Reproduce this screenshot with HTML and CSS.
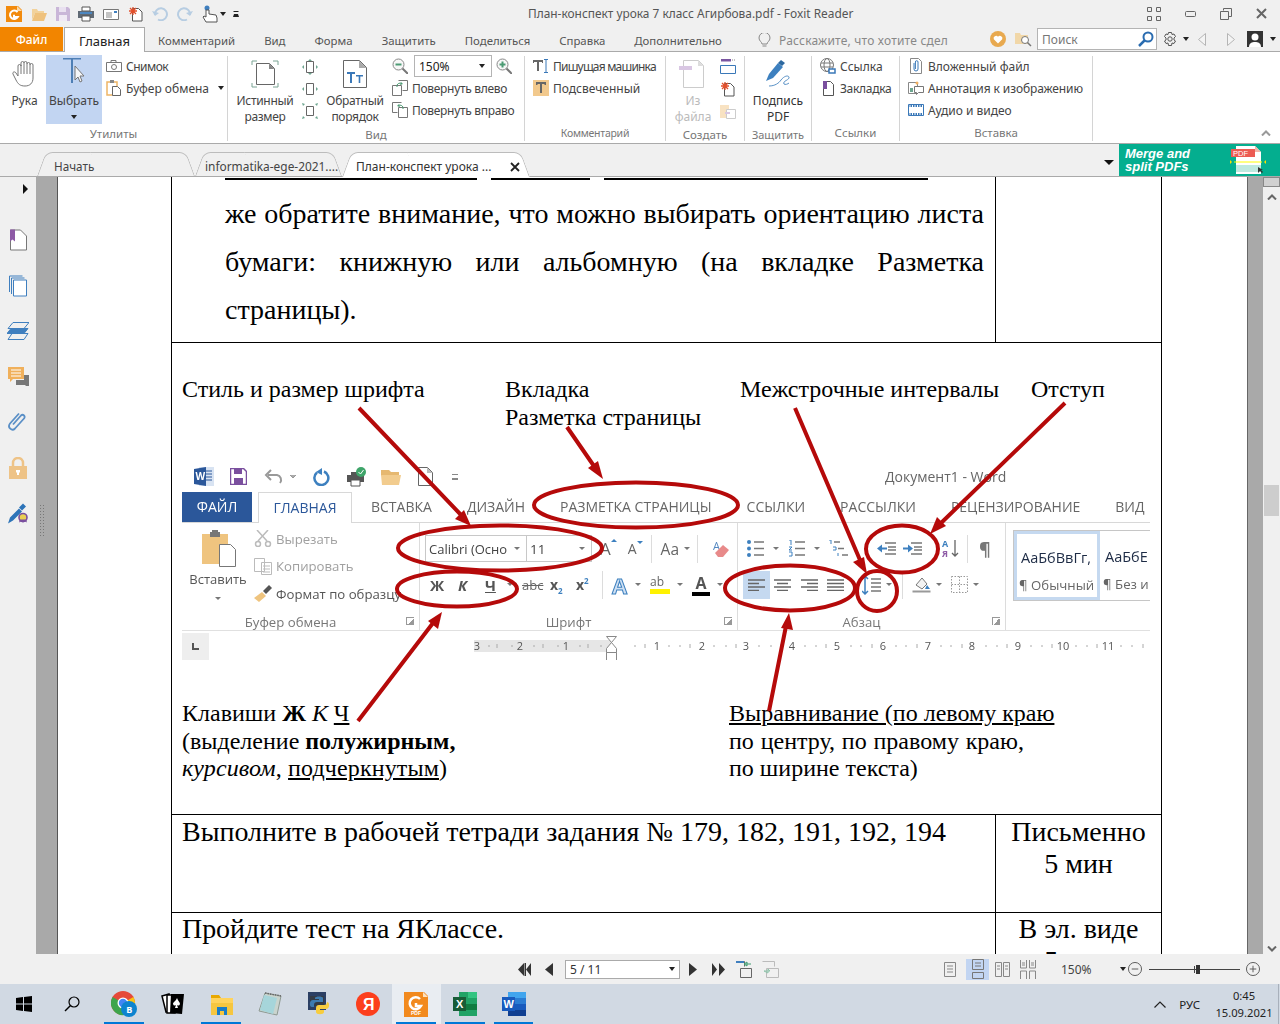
FILE: index.html
```html
<!DOCTYPE html>
<html lang="ru">
<head>
<meta charset="utf-8">
<title>План-конспект урока 7 класс Агирбова.pdf - Foxit Reader</title>
<link rel="stylesheet" href="styles.css">
</head>
<body>
<div class="app">

<header class="titlebar">
  <div class="qa">
    <svg width="16" height="16" viewBox="0 0 16 16"><path d="M0 0h12l4 4v12H0z" fill="#f28a0c"/><path d="M11 0l5 5h-5z" fill="#fbd9a8"/><path d="M11.500 6.200A4.200 4.200 0 1 0 11.800 11H8V8.800" fill="none" stroke="#fff" stroke-width="2"/></svg>
    <svg width="16" height="16" viewBox="0 0 16 16"><path d="M1 3h5l1 2h6v2H4l-3 7z" fill="#f2d29b"/><path d="M4 7h12l-3 8H1z" fill="#efc27d"/></svg>
    <svg width="14" height="14" viewBox="0 0 14 14"><path d="M0 0h12l2 2v12H0z" fill="#c9b6d8"/><path d="M3 0h7v5H3z" fill="#e9e1f0"/><path d="M3 8h8v6H3z" fill="#efe9f4"/></svg>
    <svg width="16" height="16" viewBox="0 0 16 16"><path d="M4 1h8v4H4z" fill="#fff" stroke="#555"/><path d="M0 5h16v7H0z" fill="#606a75"/><path d="M2 6h12v2H2z" fill="#4d87c0"/><path d="M4 10h8v5H4z" fill="#fff" stroke="#555"/></svg>
    <svg width="16" height="14" viewBox="0 0 16 14"><path d="M.5 2.500h15v10H.5z" fill="#fff" stroke="#777"/><path d="M3 6h6M3 8h6M3 10h6" stroke="#888"/><path d="M11 4h3v2h-3z" fill="#3f7fbf"/></svg>
    <svg width="15" height="16" viewBox="0 0 15 16"><path d="M4.500 2.500h6l3.500 3.500v9H4.500z" fill="#fff" stroke="#555"/><path d="M5 1v8M1 5h8M2 2l6 6M8 2L2 8" stroke="#e2502c" stroke-width="1.300"/></svg>
    <svg width="16" height="15" viewBox="0 0 16 15"><path d="M3 9a6 6 0 1 1 3 4.500" fill="none" stroke="#b7cde2" stroke-width="2"/><path d="M0 5l3 5 4-3z" fill="#b7cde2"/></svg>
    <svg width="16" height="15" viewBox="0 0 16 15"><path d="M13 9a6 6 0 1 0-3 4.500" fill="none" stroke="#b7cde2" stroke-width="2"/><path d="M16 5l-3 5-4-3z" fill="#b7cde2"/></svg>
    <svg width="18" height="18" viewBox="0 0 18 18"><circle cx="6" cy="3" r="2.500" fill="#3f7fbf"/><path d="M5 5v7L3 11l-1 1 3 5h11v-4l-1-3-7-1V5z" fill="#fff" stroke="#555"/></svg>
    <span class="caret dark"></span>
    <span class="customize"></span>
  </div>
  <div class="doc-title">План-конспект урока 7 класс Агирбова.pdf - Foxit Reader</div>
  <div class="winbtns">
    <svg width="14" height="14" viewBox="0 0 14 14" fill="none" stroke="#666"><path d="M.5.500h4v4h-4zM9.500.500h4v4h-4zM.5 9.500h4v4h-4zM9.500 9.500h4v4h-4z"/></svg>
    <svg width="11" height="6" viewBox="0 0 11 6" fill="none" stroke="#666"><rect x=".5" y=".5" width="10" height="5" rx="1"/></svg>
    <svg width="12" height="12" viewBox="0 0 12 12" fill="none" stroke="#666"><path d="M3.500 2.500v-2h8v8h-3M.5 3.500h8v8h-8z"/></svg>
    <svg width="11" height="11" viewBox="0 0 11 11" fill="none" stroke="#666" stroke-width="2"><path d="M1 1l9 9M10 1l-9 9"/></svg>
  </div>
</header>

<nav class="menubar">
  <span class="file-tab">Файл</span>
  <span class="home-tab">Главная</span>
  <div class="menu-items">
    <span>Комментарий</span><span>Вид</span><span>Форма</span><span>Защитить</span><span>Поделиться</span><span>Справка</span><span>Дополнительно</span>
  </div>
  <div class="tell">
    <svg width="13" height="15" viewBox="0 0 13 15" fill="none" stroke="#888"><path d="M4 11c0-2-3-3-3-6a5.500 5.500 0 0 1 11 0c0 3-3 4-3 6zM4.500 13h4"/></svg>
    <span>Расскажите, что хотите сдел</span>
  </div>
  <div class="menu-right">
    <svg class="heart" width="16" height="16" viewBox="0 0 16 16"><circle cx="8" cy="8" r="8" fill="#e8a94f"/><path d="M8 12.500L3.800 8.300a2.500 2.500 0 0 1 4.200-2.600 2.500 2.500 0 0 1 4.200 2.600z" fill="#fff"/></svg>
    <svg class="foldersearch" width="17" height="16" viewBox="0 0 17 16"><path d="M0 2h5l1 2h7v9H0z" fill="#f1d7a8"/><circle cx="10" cy="9" r="3.500" fill="#fff" stroke="#777"/><path d="M12.500 11.500l3.500 3.500" stroke="#777" stroke-width="1.500"/></svg>
    <div class="searchbox"><span>Поиск</span>
      <svg width="16" height="16" viewBox="0 0 16 16" fill="none" stroke="#2a6cb0" stroke-width="2"><circle cx="10" cy="6" r="4.500"/><path d="M6.500 9.500L1 15" stroke-width="2.500"/></svg>
    </div>
    <svg class="gear" width="14" height="14" viewBox="0 0 14 14" fill="none" stroke="#555"><circle cx="7" cy="7" r="2.200"/><path d="M5.500.5h3l.5 2 2-.5 1.500 2.500L11 6v2l1.500 1-1.500 2.500-2-.5-.5 2.500h-3L5 11l-2 .5L1.500 9 3 8V6L1.500 4.500 3 2l2 .5z"/></svg>
    <span class="caret dark"></span>
    <svg class="navl" width="8" height="13" viewBox="0 0 8 13" fill="#f4f4f4" stroke="#b5b5b5"><path d="M7.500.5v12L.5 6.500z"/></svg>
    <svg class="navr" width="8" height="13" viewBox="0 0 8 13" fill="#f4f4f4" stroke="#b5b5b5"><path d="M.5.500v12l7-6z"/></svg>
    <svg class="avatar" width="16" height="16" viewBox="0 0 16 16"><path d="M0 0h16v16H0z" fill="#333"/><circle cx="8" cy="6" r="3.500" fill="#fff"/><path d="M2 16c0-4 3-5 6-5s6 1 6 5z" fill="#fff"/></svg>
    <span class="caret dark"></span>
  </div>
</nav>

<section class="ribbon">
  <div class="rgroup g-util">
    <div class="rbody">
      <div class="big hand"><svg width="26" height="28" viewBox="0 0 26 28" fill="#fff" stroke="#777"><path d="M6 16V6a1.500 1.500 0 0 1 3 0V3a1.500 1.500 0 0 1 3 0v0a1.500 1.500 0 0 1 3 0v1a1.500 1.500 0 0 1 3 0v1a1.500 1.500 0 0 1 3 0v13c0 5-3 8-8 8s-7-2-9-6l-3-6c-1-2 2-3 3-1z"/><path d="M9 5v9M12 3v11M15 4v10M18 5v9"/></svg><span>Рука</span></div>
      <div class="big select"><svg width="30" height="30" viewBox="0 0 30 30"><path d="M2 1h18v1.500h-8V26h-2V2.500H2z" fill="#4e7fb5"/><path d="M14 9v14l3-3 2 5 2-1-2-5h4z" fill="#f4f6f9" stroke="#777"/></svg><span>Выбрать</span><span class="caret dark under"></span></div>
      <div class="small-col c-snap">
        <div class="srow"><svg width="16" height="12" viewBox="0 0 16 12" fill="none" stroke="#777"><path d="M.5 2.500h15v9H.5z"/><circle cx="8" cy="7" r="2.500"/><path d="M5 2.500v-2h5v2"/></svg><span class="ls5">Снимок</span></div>
        <div class="srow"><svg width="16" height="16" viewBox="0 0 16 16" fill="none"><path d="M1 2h10v13H1z" stroke="#eeb566" stroke-width="1.500"/><path d="M4 0h4v3H4z" fill="#888"/><path d="M6.500 6.500h5l3 3v6h-8z" fill="#fff" stroke="#666"/></svg><span>Буфер обмена</span><span class="caret dark gapped"></span></div>
      </div>
    </div>
    <div class="rlabel">Утилиты</div>
  </div>

  <div class="rgroup g-view">
    <div class="rbody">
      <div class="big b-true"><svg width="28" height="28" viewBox="0 0 28 28" fill="none"><path d="M1 5V1h5M22 1h5v4M1 23v4h5M22 27h5v-4" stroke="#7aa494"/><path d="M5.500 3.500h13l5 5v16h-18z" fill="#fff" stroke="#666"/><path d="M18 3.500l5.500 5.500H18z" fill="#888"/></svg><span class="ls3">Истинный<br>размер</span></div>
      <div class="iconcol">
        <svg width="16" height="16" viewBox="0 0 16 16" fill="none"><path d="M4.500 2.500h7v11h-7z" stroke="#666"/><path d="M8 0l2 2H6zM8 16l2-2H6zM0 8l2-2v4zM16 8l-2-2v4z" fill="#6ea690"/></svg>
        <svg width="16" height="16" viewBox="0 0 16 16" fill="none"><path d="M4.500 2.500h7v11h-7z" stroke="#666"/><path d="M0 8l2-2v4zM16 8l-2-2v4z" fill="#6ea690"/></svg>
        <svg width="16" height="16" viewBox="0 0 16 16" fill="none"><path d="M4.500 3.500h7v9h-7z" stroke="#666"/><path d="M0 0l3 1-2 2zM16 0l-1 3-2-2zM0 16l1-3 2 2zM16 16l-3-1 2-2z" fill="#6ea690"/></svg>
      </div>
      <div class="big b-rev"><svg width="24" height="28" viewBox="0 0 24 28" fill="none"><path d="M.5.500h16l7 7v20H.5z" fill="#fff" stroke="#666"/><path d="M16 .5l7.500 7.500H16z" fill="#aaa"/><path d="M4 12h8v2H9v9H7v-9H4zM13 15h7v1.500h-2.700V23h-1.600v-6.500H13z" fill="#3a78b8"/></svg><span class="ls3">Обратный<br>порядок</span></div>
      <div class="small-col c-zoom">
        <div class="srow"><svg width="16" height="16" viewBox="0 0 16 16" fill="none"><circle cx="6.500" cy="6.500" r="5.500" stroke="#888" fill="#f7f7f7"/><path d="M3.500 6.500h6" stroke="#4c9b74" stroke-width="2"/><path d="M10.500 10.500L16 16" stroke="#777" stroke-width="2"/></svg>
          <div class="combo"><span>150%</span><span class="caret dark"></span></div>
          <svg width="16" height="16" viewBox="0 0 16 16" fill="none"><circle cx="6.500" cy="6.500" r="5.500" stroke="#888" fill="#f7f7f7"/><path d="M3.500 6.500h6M6.500 3.500v6" stroke="#4c9b74" stroke-width="2"/><path d="M10.500 10.500L16 16" stroke="#777" stroke-width="2"/></svg></div>
        <div class="srow"><svg width="16" height="16" viewBox="0 0 16 16" fill="none"><path d="M6.500.500h9v10h-5M.5 5.500h9v10h-9z" stroke="#777"/><path d="M5 7a3 3 0 0 1 5-3" stroke="#4c9b74"/><path d="M9 2l2 2-3 1z" fill="#4c9b74"/></svg><span class="ls3">Повернуть влево</span></div>
        <div class="srow"><svg width="16" height="16" viewBox="0 0 16 16" fill="none"><path d="M9.500.500h-9v10h5M15.500 5.500h-9v10h9z" stroke="#777"/><path d="M11 7a3 3 0 0 0-5-3" stroke="#4c9b74"/><path d="M7 2L5 4l3 1z" fill="#4c9b74"/></svg><span class="ls3">Повернуть вправо</span></div>
      </div>
    </div>
    <div class="rlabel">Вид</div>
  </div>

  <div class="rgroup g-comm">
    <div class="rbody">
      <div class="small-col">
        <div class="srow"><svg width="16" height="14" viewBox="0 0 16 14"><path d="M0 1h10v3H9V3H6v9H4V3H1v1H0z" fill="#666"/><path d="M11 .5h4M13 .5v13M11 13.500h4" stroke="#3a78b8" fill="none"/></svg><span class="ls8">Пишущая машинка</span></div>
        <div class="srow"><svg width="16" height="16" viewBox="0 0 16 16"><path d="M0 0h16v16H0z" fill="#f2c98d"/><path d="M3 2h10v3h-1.500V4H9v9H7V4H4.500v1H3z" fill="#666"/></svg><span>Подсвеченный</span></div>
      </div>
    </div>
    <div class="rlabel lab-comm">Комментарий</div>
  </div>

  <div class="rgroup g-create">
    <div class="rbody">
      <div class="big b-file disabled"><svg width="28" height="28" viewBox="0 0 28 28"><path d="M4.500.500h15l5 5v22h-20z" fill="#fff" stroke="#ccc"/><path d="M19 .5l5.500 5.500H19z" fill="#ddd"/><path d="M0 6h13v4H0z" fill="#d9c7e3"/></svg><span>Из<br>файла</span></div>
      <div class="iconcol">
        <svg width="16" height="16" viewBox="0 0 16 16" fill="none"><path d="M1 1h10" stroke="#7a55a0" stroke-width="3"/><path d="M.5 6.500h15v8H.5z" stroke="#3a78b8"/><path d="M12 1h3" stroke="#888" stroke-dasharray="1 1"/></svg>
        <svg width="15" height="16" viewBox="0 0 15 16"><path d="M4.500 2.500h6l3.500 3.500v9H4.500z" fill="#fff" stroke="#555"/><path d="M5 1v8M1 5h8M2 2l6 6M8 2L2 8" stroke="#e2502c" stroke-width="1.300"/></svg>
        <svg width="16" height="16" viewBox="0 0 16 16" fill="none"><path d="M0 2h9v13H0z" fill="#f8e2c2"/><path d="M6.500 6.500h9v9h-9z" fill="#fff" stroke="#ccc"/><path d="M5 10h5" stroke="#d9c7e3" stroke-width="2"/></svg>
      </div>
    </div>
    <div class="rlabel">Создать</div>
  </div>

  <div class="rgroup g-protect">
    <div class="rbody">
      <div class="big b-sign"><svg width="28" height="28" viewBox="0 0 28 28" fill="none"><path d="M2 21l3-7 9-11 5 4-10 11z" fill="#3d80bf"/><path d="M14 3l3-3 4 3-3 3z" fill="#2d689f"/><path d="M5 26c6 0 10-3 12-6 3-4 7-5 8-3 1 3-7 4-5 7 1 1 4 0 5-1" stroke="#5a92c7"/></svg><span>Подпись<br>PDF</span></div>
    </div>
    <div class="rlabel lab-prot">Защитить</div>
  </div>

  <div class="rgroup g-links">
    <div class="rbody">
      <div class="small-col">
        <div class="srow"><svg width="16" height="16" viewBox="0 0 16 16" fill="none" stroke="#777"><circle cx="7" cy="7" r="6.500"/><ellipse cx="7" cy="7" rx="3" ry="6.500"/><path d="M1 5h12M1 9h12"/><path d="M9 11h6v4H9z" fill="#fff" stroke="#3a78b8" stroke-width="1.500"/></svg><span>Ссылка</span></div>
        <div class="srow"><svg width="16" height="15" viewBox="0 0 16 15" fill="none"><path d="M3.500.500h7l3 3v11h-10z" fill="#fff" stroke="#555"/><path d="M3 0h4v8H3z" fill="#7a4f9e"/></svg><span class="ls3">Закладка</span></div>
      </div>
    </div>
    <div class="rlabel">Ссылки</div>
  </div>

  <div class="rgroup g-insert">
    <div class="rbody">
      <div class="small-col">
        <div class="srow"><svg width="16" height="16" viewBox="0 0 16 16" fill="none"><path d="M2.500.500h8l3 3v12h-11z" stroke="#888"/><path d="M6 5v6a2 2 0 0 0 4 0V4a1.300 1.300 0 0 0-2.600 0v7" stroke="#3a78b8"/></svg><span>Вложенный файл</span></div>
        <div class="srow"><svg width="16" height="16" viewBox="0 0 16 16" fill="none"><path d="M.5 2.500h9v11h-9z" stroke="#888"/><path d="M2 12V8h3v4z" fill="#6ea690"/><circle cx="9" cy="3" r="1.500" fill="#f2b05f"/><path d="M6.500 6.500h9v6h-5l-2 2v-2h-2z" fill="#fff" stroke="#777"/></svg><span class="ls1">Аннотация к изображению</span></div>
        <div class="srow"><svg width="16" height="12" viewBox="0 0 16 12" fill="none"><path d="M.5.500h15v11H.5z" stroke="#3a78b8"/><path d="M0 2h16M0 10h16" stroke="#3a78b8" stroke-width="2" stroke-dasharray="1.500 1"/></svg><span>Аудио и видео</span></div>
      </div>
    </div>
    <div class="rlabel">Вставка</div>
  </div>
  <svg class="collapse" width="10" height="6" viewBox="0 0 10 6" fill="none" stroke="#999" stroke-width="2"><path d="M1 5.500L5 1.500l4 4"/></svg>
</section>

<div class="tabstrip">
  <div class="doc-tab t-start"><span>Начать</span></div>
  <div class="doc-tab t-info"><span>informatika-ege-2021....</span></div>
  <div class="doc-tab t-plan active"><span>План-конспект урока ...</span>
    <svg width="10" height="10" viewBox="0 0 10 10" stroke="#222" stroke-width="1.800"><path d="M1 1l8 8M9 1l-8 8"/></svg></div>
  <span class="strip-arrow"></span>
  <div class="ad">
    <span class="ad-text">Merge and<br>split PDFs</span>
    <svg width="36" height="28" viewBox="0 0 36 28"><path d="M6 0h19l6 6v22H6z" fill="#fff"/><path d="M25 0l6 6h-6z" fill="#f3b5a9"/><path d="M1 3h24v8H1z" fill="#ec5b53"/><text x="3" y="10" font-size="7.500" fill="#fff" font-family="Liberation Sans, sans-serif">PDF</text><path d="M4 16h28" stroke="#ff0" stroke-width="1"/><path d="M6 19h25v7H6z" fill="#bfe9df"/><path d="M0 14v4l2-2zM36 14v4l-2-2z" fill="#fde000"/><path d="M28 21v6l2-2 2 2 1-1-2-2h2z" fill="#333"/></svg>
  </div>
</div>

<main class="viewer">
  <aside class="sidepanel">
    <span class="expand"></span>
    <svg width="17" height="21" viewBox="0 0 17 21"><path d="M.5.500h10l6 6v14H.5z" fill="#fff" stroke="#777"/><path d="M0 0h5v12l-2.500-2L0 12z" fill="#8e5ba6"/></svg>
    <svg width="18" height="21" viewBox="0 0 18 21" fill="#fff" stroke="#3f7fbf"><path d="M.5.500h13M.5.500v16M2.500 2.500h13M2.500 2.500v16"/><path d="M4.500 4.500h13v16h-13z"/></svg>
    <svg width="22" height="19" viewBox="0 0 22 19" fill="none" stroke="#3f7fbf"><path d="M6 1h16l-5 6H1z"/><path d="M4 7h17l-4 5H0z" fill="#3f7fbf"/><path d="M5 12h16l-4 6H1z"/></svg>
    <svg width="21" height="20" viewBox="0 0 21 20"><path d="M0 0h16v12H5l-3 3v-3H0z" fill="#f0b05b"/><path d="M3 3h10M3 6h10M3 9h10" stroke="#fff"/><path d="M8 13h8v-5h5v11h-3l-1-1H8z" fill="#777"/></svg>
    <svg width="20" height="21" viewBox="0 0 20 21" fill="none" stroke="#5a8fc6" stroke-width="1.800"><path d="M5 13l8-9c2-2 5 1 3 3l-9 10c-3 3-8-1-5-5l9-10"/></svg>
    <svg width="18" height="22" viewBox="0 0 18 22"><path d="M4 10V6a5 5 0 0 1 10 0v4" fill="none" stroke="#eec387" stroke-width="2.500"/><path d="M0 9h18v13H0z" fill="#eec387"/><path d="M7 13h4v2l-1 1v2H8v-2l-1-1z" fill="#fff"/></svg>
    <svg width="21" height="21" viewBox="0 0 21 21"><path d="M0 21l2-6 9-9 3 3-9 9zM11 5l4-4 3 3-4 4z" fill="#2d74b8"/><circle cx="15" cy="15" r="4" fill="#e9cf52" stroke="#7a4f9e" stroke-width="1.600"/><path d="M11 20l1-3h6l1 3-2-1-2 1-2-1z" fill="#7a4f9e"/></svg>
  </aside>
  <div class="workspace">
    <span class="grip"></span>
    <article class="page">
      <div class="doc-table">
        <div class="row r1">
          <div class="cell main-cell">
            <div class="cut-lines"><i class="b1"></i><i class="b2"></i><i class="b3"></i></div>
            <p class="para">же обратите внимание, что можно выбирать ориентацию листа бумаги: книжную или альбомную (на вкладке Разметка страницы).</p>
          </div>
          <div class="cell side-cell"></div>
        </div>

        <div class="row r2">
          <div class="labels">
            <span>Стиль и размер шрифта</span>
            <span>Вкладка<br>Разметка страницы</span>
            <span>Межстрочные интервалы</span>
            <span>Отступ</span>
          </div>

          <div class="word">
            <div class="w-qa">
              <svg class="m1" width="20" height="19" viewBox="0 0 20 19"><path d="M5 0h15v19H5z" fill="#d8e3f2"/><path d="M10 4h8M10 7h8M10 10h8M10 13h8" stroke="#2b579a"/><path d="M0 2l12-2v19L0 17z" fill="#2b579a"/><text x="1.500" y="13" font-size="10" font-weight="700" fill="#fff" font-family="Open Sans, sans-serif">W</text></svg>
              <svg class="m2" width="17" height="17" viewBox="0 0 17 17"><path d="M.5.500h13l3 3v13H.5z" fill="#fff" stroke="#7a4f9e" stroke-width="1.500"/><path d="M4 1h8v5H4z" fill="#7a4f9e"/><path d="M4 10h9v6H4z" fill="#7a4f9e"/></svg>
              <svg class="m3" width="34" height="15" viewBox="0 0 34 15" fill="none" stroke="#999" stroke-width="2"><path d="M4 6h9a5 5 0 0 1 3 8"/><path d="M7 1L2 6l5 5"/><path d="M26 6l3 3 3-3" stroke-width="1" fill="#aaa"/></svg>
              <svg class="m4" width="17" height="18" viewBox="0 0 17 18" fill="none" stroke="#3d80bf" stroke-width="2.500"><path d="M11 3.500a7 7 0 1 1-7 1"/><path d="M9 0v7l-6 -3" fill="#3d80bf" stroke="none"/></svg>
              <svg class="m5" width="20" height="20" viewBox="0 0 20 20"><path d="M4 5h10v4H4zM0 8h17v7H0z" fill="#555"/><path d="M4 13h9v6H4z" fill="#fff" stroke="#555"/><circle cx="14" cy="5" r="5" fill="#3fa56a"/><path d="M11.500 5l2 2 3-4" stroke="#fff" fill="none"/></svg>
              <svg class="m6" width="20" height="16" viewBox="0 0 20 16"><path d="M0 1h8l2 2h8v4H0z" fill="#e6b870"/><path d="M0 6h20l-2 10H1z" fill="#f2cc8e"/></svg>
              <svg class="m7" width="15" height="19" viewBox="0 0 15 19"><path d="M.5.500h9l5 5v13H.5z" fill="#fff" stroke="#666"/><path d="M9 .5l5.500 5.500H9z" fill="#bbb"/></svg>
              <span class="w-cust"></span>
              <span class="w-title">Документ1 - Word</span>
            </div>
            <div class="w-tabs">
              <span class="w-file">ФАЙЛ</span>
              <span class="w-home">ГЛАВНАЯ</span>
              <div class="w-tablist"><span>ВСТАВКА</span><span>ДИЗАЙН</span><span>РАЗМЕТКА СТРАНИЦЫ</span><span>ССЫЛКИ</span><span>РАССЫЛКИ</span><span>РЕЦЕНЗИРОВАНИЕ</span><span>ВИД</span></div>
            </div>
            <div class="w-rib">
              <div class="w-group wg-clip">
                <div class="wg-body">
                  <div class="paste">
                    <svg width="34" height="37" viewBox="0 0 34 37"><path d="M0 4h26v30H0z" fill="#efc47f"/><path d="M8 2h10v5H8z" fill="#777"/><path d="M10 0h6v3h-6z" fill="#777"/><path d="M17.500 14.500h11l5 5v17h-16z" fill="#fff" stroke="#777"/></svg>
                    <span>Вставить</span><i class="w-caret"></i>
                  </div>
                  <div class="clip-tools">
                    <div class="ct dim"><svg width="18" height="17" viewBox="0 0 18 17" fill="none" stroke="#bbb" stroke-width="1.500"><path d="M3 0l10 11M14 0L4 11"/><circle cx="4" cy="14" r="2.500"/><circle cx="14" cy="14" r="2.500"/></svg><span>Вырезать</span></div>
                    <div class="ct dim"><svg width="18" height="17" viewBox="0 0 18 17" fill="#fff" stroke="#bbb"><path d="M.5.500h10v13H.5zM7.500 4.500h10v12h-10z"/><path d="M9 8h7M9 11h7M9 14h7"/></svg><span>Копировать</span></div>
                    <div class="ct"><svg width="18" height="17" viewBox="0 0 18 17"><path d="M0 13l8-6 4 4-7 6z" fill="#efc47f"/><path d="M9 6l6-6 3 3-6 6z" fill="#555"/></svg><span>Формат по образцу</span></div>
                  </div>
                </div>
                <div class="wg-label">Буфер обмена<i class="launch"></i></div>
              </div>

              <div class="w-group wg-font">
                <div class="wg-body column">
                  <div class="f-row f1">
                    <div class="w-combo cb-font"><span>Calibri (Осно</span><i class="w-caret"></i></div>
                    <div class="w-combo cb-size"><span>11</span><i class="w-caret"></i></div>
                    <span class="bigA up">A</span><span class="bigA down">A</span><i class="w-div d1"></i>
                    <span class="aa">Aa</span><i class="w-caret"></i><i class="w-div d2"></i>
                    <svg class="eraser" width="16" height="18" viewBox="0 0 16 18"><text x="0" y="10" font-size="11" fill="#5588c0" font-family="Open Sans, sans-serif">A</text><path d="M2 13l8-8 6 5-6 7H5z" fill="#e88a8a"/></svg>
                  </div>
                  <div class="f-row f2">
                    <b class="bt b-zh">Ж</b><i class="bt b-k">К</i><u class="bt b-ch">Ч</u><i class="w-caret c-ch"></i>
                    <s class="abc">abc</s><span class="xs x1">x<sub>2</sub></span><span class="xs x2">x<sup>2</sup></span><i class="w-div d3"></i>
                    <span class="outlineA">A</span><i class="w-caret"></i>
                    <span class="hiA">ab</span><i class="w-caret"></i>
                    <span class="colorA">A</span><i class="w-caret"></i>
                  </div>
                </div>
                <div class="wg-label">Шрифт<i class="launch"></i></div>
              </div>

              <div class="w-group wg-para">
                <div class="wg-body column">
                  <div class="p-row p1">
                    <svg width="17" height="17" viewBox="0 0 17 17"><path d="M7 2h10M7 8.500h10M7 15h10" stroke="#777" stroke-width="1.500"/><circle cx="2" cy="2" r="2" fill="#3d80bf"/><circle cx="2" cy="8.500" r="2" fill="#3d80bf"/><circle cx="2" cy="15" r="2" fill="#3d80bf"/></svg><i class="w-caret"></i>
                    <svg width="17" height="17" viewBox="0 0 17 17"><path d="M7 2h10M7 8.500h10M7 15h10" stroke="#777" stroke-width="1.500"/><path d="M1 0h2v5M1 7h3l-3 3h3M1 12h3v4H1" stroke="#3d80bf" fill="none"/></svg><i class="w-caret"></i>
                    <svg width="19" height="17" viewBox="0 0 19 17"><path d="M5 2h6M9 8.500h6M13 15h6" stroke="#777" stroke-width="1.500"/><path d="M0 0h2v4M4 7h3v3H4M9 13v3" stroke="#3d80bf" fill="none"/></svg>
                    <svg class="outd" width="19" height="13" viewBox="0 0 19 13"><path d="M8 1h11M11 5h8M11 8h8M8 12h11" stroke="#777" stroke-width="1.300"/><path d="M0 6.500l5-4v3h5v2H5v3z" fill="#3d80bf"/></svg>
                    <svg class="ind" width="19" height="13" viewBox="0 0 19 13"><path d="M8 1h11M11 5h8M11 8h8M8 12h11" stroke="#777" stroke-width="1.300"/><path d="M10 6.500l-5-4v3H0v2h5v3z" fill="#3d80bf"/></svg>
                    <svg class="sort" width="17" height="19" viewBox="0 0 17 19"><text x="0" y="8" font-size="9" font-weight="700" fill="#3d80bf" font-family="Open Sans, sans-serif">A</text><text x="0" y="18" font-size="9" font-weight="700" fill="#8e5ba6" font-family="Open Sans, sans-serif">Я</text><path d="M13 1v16M10 14l3 3 3-3" stroke="#666" fill="none" stroke-width="1.300"/></svg>
                    <i class="w-div d4"></i>
                    <span class="pilcrow">¶</span>
                  </div>
                  <div class="p-row p2">
                    <span class="al active"><svg width="17" height="12" viewBox="0 0 17 12" stroke="#666" stroke-width="1.300"><path d="M0 1h17M0 4.500h11M0 8h17M0 11.500h11"/></svg></span>
                    <span class="al"><svg width="17" height="12" viewBox="0 0 17 12" stroke="#666" stroke-width="1.300"><path d="M0 1h17M3 4.500h11M0 8h17M3 11.500h11"/></svg></span>
                    <span class="al"><svg width="17" height="12" viewBox="0 0 17 12" stroke="#666" stroke-width="1.300"><path d="M0 1h17M6 4.500h11M0 8h17M6 11.500h11"/></svg></span>
                    <span class="al"><svg width="17" height="12" viewBox="0 0 17 12" stroke="#666" stroke-width="1.300"><path d="M0 1h17M0 4.500h17M0 8h17M0 11.500h17"/></svg></span>
                    <svg class="ls" width="19" height="20" viewBox="0 0 19 20"><path d="M9 4h10M9 8h10M9 12h10M9 16h10" stroke="#777" stroke-width="1.300"/><path d="M3 1v18M0 4l3-3 3 3M0 16l3 3 3-3" stroke="#3d80bf" fill="none" stroke-width="1.500"/></svg><i class="w-caret"></i><i class="w-div d5"></i>
                    <svg class="fill" width="19" height="18" viewBox="0 0 19 18" fill="none"><path d="M4 9l6-7 5 6-5 5z" fill="#f3f3f3" stroke="#777"/><path d="M15 9l3 4h-5z" fill="#3d80bf"/><path d="M.5 15.500h18" stroke="#999" stroke-width="2"/></svg><i class="w-caret"></i>
                    <svg class="bord" width="17" height="17" viewBox="0 0 17 17" fill="none" stroke="#999" stroke-dasharray="1.500 1.500"><path d="M.5.500h16v16H.5zM8.500.500v16M.5 8.500h16"/></svg><i class="w-caret"></i>
                  </div>
                </div>
                <div class="wg-label">Абзац<i class="launch"></i></div>
              </div>

              <div class="w-styles">
                <div class="st sel"><span class="st-a">АаБбВвГг,</span><span class="st-n">¶ Обычный</span></div>
                <div class="st"><span class="st-a">АаБбЕ</span><span class="st-n">¶ Без и</span></div>
              </div>
            </div>
            <div class="w-ruler">
              <span class="corner"><i></i></span>
              <svg width="968" height="26" viewBox="182 634 968 26">
                <rect x="474" y="640" width="138" height="12" fill="#e6e6e6"/>
                <g class="ticks"><path d="M488 646h2M497 644v4M511 646h2M533 646h2M543 644v4M557 646h2M579 646h2M588 644v4M600 646h2M634 646h2M645 644v4M668 646h2M679 646h2M690 644v4M713 646h2M725 646h2M736 644v4M758 646h2M770 646h2M781 644v4M804 646h2M815 646h2M826 644v4M850 646h2M860 646h2M872 644v4M895 646h2M905 646h2M917 644v4M940 646h2M950 646h2M962 644v4M985 646h2M996 646h2M1007 644v4M1030 646h2M1041 646h2M1052 644v4M1075 646h2M1086 646h2M1097 644v4M1120 646h2M1131 646h2M1143 644v4"/></g>
                <g class="rnums"><text x="477" y="650">3</text><text x="520" y="650">2</text><text x="566" y="650">1</text><text x="657" y="650">1</text><text x="702" y="650">2</text><text x="746" y="650">3</text><text x="792" y="650">4</text><text x="837" y="650">5</text><text x="883" y="650">6</text><text x="928" y="650">7</text><text x="972" y="650">8</text><text x="1018" y="650">9</text><text x="1063" y="650">10</text><text x="1108" y="650">11</text></g>
                <path d="M606.500 636.500h10l-5 6 5 6v4h-10v-4l5-6-5-6zM606.500 652.500h10v8h-10z" fill="#fff" stroke="#888"/>
              </svg>
            </div>
          </div>

          <div class="captions">
            <div class="cap-l">Клавиши <b>Ж</b> <i>К</i> <u>Ч</u><br>(выделение <b>полужирным,</b><br><span class="cap-stretch"><i>курсивом</i>, <u>подчеркнутым</u>)</span></div>
            <div class="cap-r"><u>Выравнивание (по левому краю</u><br><span class="cap-words">по центру, по правому краю,</span><br>по ширине текста)</div>
          </div>

          <svg class="marks" width="990" height="472" viewBox="172 342 990 472" fill="none" stroke="#b50a0a">
            <g stroke-width="4">
              <ellipse cx="636" cy="504" rx="102" ry="22.500"/>
              <ellipse cx="500" cy="547" rx="102" ry="22.500"/>
              <ellipse cx="457" cy="588" rx="60" ry="17.500"/>
              <ellipse cx="790" cy="587" rx="65" ry="22.500"/>
              <ellipse cx="877" cy="590" rx="20" ry="20"/>
              <ellipse cx="902" cy="548" rx="36" ry="23.500"/>
              <path d="M359 407l104 109M567 426l29 42M795 407l65 152M1065 402L940 523M358 720l75-98M769 710l17-85"/>
            </g>
            <g fill="#b50a0a" stroke="none">
              <path d="M471 525l-16-7 9-9z"/>
              <path d="M603 478l-15-11 10-7z"/>
              <path d="M867 573l-14-12 11-5z"/>
              <path d="M930 533l7-17 9 9z"/>
              <path d="M442 611l-4 17-10-8z"/>
              <path d="M789 612l4 17-12-2z"/>
            </g>
          </svg>
        </div>

        <div class="row r3">
          <div class="cell main-cell task">Выполните в рабочей тетради задания № 179, 182, 191, 192, 194</div>
          <div class="cell side-cell center">Письменно<br>5 мин</div>
        </div>
        <div class="row r4">
          <div class="cell main-cell task">Пройдите тест на ЯКлассе.</div>
          <div class="cell side-cell center">В эл. виде<br>5 мин</div>
        </div>
      </div>
    </article>
    <div class="rightgap"></div>
  </div>
  <div class="scrollbar">
    <span class="sb-corner"></span>
    <svg class="sb-up" width="10" height="6" viewBox="0 0 10 6" fill="none" stroke="#666" stroke-width="2"><path d="M1 5.500L5 1.500l4 4"/></svg>
    <span class="sb-thumb"></span>
    <svg class="sb-down" width="10" height="6" viewBox="0 0 10 6" fill="none" stroke="#666" stroke-width="2"><path d="M1 .5L5 4.500l4-4"/></svg>
  </div>
</main>

<footer class="statusbar">
  <div class="pager">
    <svg width="13" height="15" viewBox="0 0 13 15" fill="#333"><path d="M6 1v13L0 7.500zM13 1v13L8 7.500z"/><path d="M6.500 1h1.500v13H6.500z"/></svg>
    <svg class="prev" width="8" height="13" viewBox="0 0 8 13" fill="#333"><path d="M8 0v13L0 6.500z"/></svg>
    <div class="page-combo"><span>5 / 11</span><span class="caret dark"></span></div>
    <svg class="next" width="8" height="13" viewBox="0 0 8 13" fill="#333"><path d="M0 0v13l8-6.500z"/></svg>
    <svg class="last" width="13" height="15" viewBox="0 0 13 15" fill="#333"><path d="M0 1v13l5-6.500zM7 1v13l6-6.500z"/></svg>
    <svg class="view-a" width="17" height="17" viewBox="0 0 17 17" fill="none"><path d="M.5.500h8v5M4.500 7.500h11v9h-11z" stroke="#666"/><path d="M8 3h7M8 3l3-2v4z" stroke="#3f9b70"/><path d="M0 0h8v2H0z" fill="#3f7fbf"/></svg>
    <svg class="view-b" width="17" height="17" viewBox="0 0 17 17" fill="none" stroke="#bbb"><path d="M.5.500h12v5M4.500 7.500h12v9h-12z"/><path d="M2 10h6l-2-2v4z" stroke="#8fc4ab"/></svg>
  </div>
  <div class="zoomctl">
    <svg class="v1" width="12" height="15" viewBox="0 0 12 15" fill="none" stroke="#888"><path d="M.5.500h11v14H.5zM3 4h6M3 7h6M3 10h6"/></svg>
    <span class="v2"><svg width="12" height="20" viewBox="0 0 12 20" fill="none" stroke="#777"><path d="M.5.500h11v10H.5zM.5 13.500h11v6H.5zM3 4h6M3 7h6"/></svg></span>
    <svg class="v3" width="15" height="15" viewBox="0 0 15 15" fill="none" stroke="#888"><path d="M.5.500h6v14h-6zM8.500.500h6v14h-6zM2 4h3M2 7h3M10 4h3M10 7h3"/></svg>
    <svg class="v4" width="16" height="19" viewBox="0 0 16 19" fill="none" stroke="#888"><path d="M.5 0v8h6V0M9.500 0v8h6V0M.5 19v-8h6v8M9.500 19v-8h6v8M2 3h3M2 5h3M11 3h3M11 5h3"/></svg>
    <span class="pct">150%</span>
    <span class="caret dark pct-c"></span>
    <svg width="14" height="14" viewBox="0 0 15 15" fill="none" stroke="#555"><circle cx="7.500" cy="7.500" r="7"/><path d="M4 7.500h7"/></svg>
    <span class="slider"><i></i><b></b></span>
    <svg width="14" height="14" viewBox="0 0 15 15" fill="none" stroke="#555"><circle cx="7.500" cy="7.500" r="7"/><path d="M4 7.500h7M7.500 4v7"/></svg>
  </div>
</footer>

<div class="taskbar">
  <div class="tb-cell"><svg width="16" height="16" viewBox="0 0 16 16" fill="#000"><path d="M0 2l7-1v6.500H0zM8 1l8-1v7.500H8zM0 8.500h7V15l-7-1zM8 8.500h8V16l-8-1z"/></svg></div>
  <div class="tb-cell"><svg width="16" height="16" viewBox="0 0 16 16" fill="none" stroke="#000" stroke-width="1.200"><circle cx="10" cy="6" r="5"/><path d="M6.500 9.500L1 15" stroke-width="1.500"/></svg></div>
  <div class="tb-apps">
    <div class="tb-app on"><svg width="26" height="26" viewBox="0 0 26 26"><circle cx="12" cy="12" r="12" fill="#e5493a"/><path d="M12 12L22.400 6A12 12 0 0 1 16 23.300z" fill="#f9c312"/><path d="M12 12l4 11.300A12 12 0 0 1 1.600 6z" fill="#3da54c"/><circle cx="12" cy="12" r="5.500" fill="#fff"/><circle cx="12" cy="12" r="4.200" fill="#4285f4"/><circle cx="18" cy="18" r="8" fill="#0d84cf"/><text x="15.200" y="21.500" font-size="9" font-weight="700" fill="#fff" font-family="Open Sans, sans-serif">B</text></svg></div>
    <div class="tb-app"><svg width="24" height="24" viewBox="0 0 24 24"><path d="M1 4l7-2 3 16-6 2z" fill="#fff" stroke="#000" stroke-width="1.500"/><path d="M6 3h8v18H6z" fill="#fff" stroke="#000" stroke-width="1.500"/><path d="M10 2h13l-2 20-12-1z" fill="#000"/><path d="M16 6c1 3 3 4 3 6a2 2 0 0 1-3 1l1 3h-3l1-3a2 2 0 0 1-3-1c0-2 3-3 4-6z" fill="#fff"/></svg></div>
    <div class="tb-app on"><svg width="22" height="22" viewBox="0 0 22 22"><path d="M0 2h8l2 3H0z" fill="#e8a800"/><path d="M0 5h22v5H0z" fill="#ffd35c"/><path d="M0 10h22v12H0z" fill="#f6c63f"/><path d="M6 14h10v8h-3v-4h-4v4H6z" fill="#1a7dc7"/></svg></div>
    <div class="tb-app"><svg width="24" height="24" viewBox="0 0 24 24"><path d="M7 1l16 3-4 19L1 19z" fill="#c9d4ce" stroke="#8f9a93"/><path d="M6 3l13 3-4 16L2 18z" fill="#a6d5da"/><path d="M7 1l16 3" stroke="#666" stroke-width="1.500" stroke-dasharray="1.500 1"/></svg></div>
    <div class="tb-app"><svg width="22" height="24" viewBox="0 0 22 24"><path d="M0 0h18v18H0z" fill="#2b3f63"/><path d="M2 4h14v10H2z" fill="#333a44"/><path d="M7 6c0-2 8-2 8 0v4H9c-2 0-3 1-3 3v2H4c-3 0-3-7 1-7h6V7H7z" fill="#3d7bb0"/><path d="M19 10c3 0 3 7-1 7h-6v1h4v2c0 3-8 3-8 0v-4c0-2 1-3 3-3h5c2 0 3-1 3-3z" fill="#f7cd3f"/></svg></div>
    <div class="tb-app"><svg width="24" height="24" viewBox="0 0 24 24"><circle cx="12" cy="12" r="12" fill="#fc3f1d"/><text x="7" y="18" font-size="16" font-weight="700" fill="#fff" font-family="Liberation Sans, sans-serif">Я</text></svg></div>
    <div class="tb-app active on"><svg width="24" height="25" viewBox="0 0 24 25"><path d="M0 0h20l4 4v21H0z" fill="#f28a1e"/><path d="M19 0l5 5h-5z" fill="#fde1bf"/><path d="M16 7a6 6 0 1 0 1 7h-5v-3" fill="none" stroke="#fff" stroke-width="2.500"/><text x="7" y="23" font-size="5" font-weight="700" fill="#fff" font-family="Liberation Sans, sans-serif">PDF</text></svg></div>
    <div class="tb-app on"><svg width="24" height="24" viewBox="0 0 24 24"><path d="M6 0h18v24H6z" fill="#21a366"/><path d="M15 0h9v6h-9z" fill="#33c481"/><path d="M6 12h18v6H6z" fill="#107c41"/><path d="M15 6h9v6h-9z" fill="#21a366"/><path d="M0 5h13v14H0z" fill="#185c37"/><text x="3" y="16" font-size="11" font-weight="700" fill="#fff" font-family="Liberation Sans, sans-serif">X</text></svg></div>
    <div class="tb-app on"><svg width="24" height="24" viewBox="0 0 24 24"><path d="M6 0h18v6H6z" fill="#41a5ee"/><path d="M6 6h18v6H6z" fill="#2b7cd3"/><path d="M6 12h18v6H6z" fill="#185abd"/><path d="M6 18h18v6H6z" fill="#103f91"/><path d="M0 5h13v14H0z" fill="#185abd"/><text x="1.500" y="16" font-size="11" font-weight="700" fill="#fff" font-family="Liberation Sans, sans-serif">W</text></svg></div>
  </div>
  <div class="tray">
    <svg width="12" height="7" viewBox="0 0 12 7" fill="none" stroke="#222" stroke-width="1.200"><path d="M.5 6.500L6 1l5.500 5.500"/></svg>
    <span class="lang">РУС</span>
    <div class="clock"><span>0:45</span><span>15.09.2021</span></div>
    <i class="showdesk"></i>
  </div>
</div>

</div>
</body>
</html>
```

FILE: styles.css
```css
* { box-sizing: border-box; }
html, body { margin: 0; padding: 0; }
body { width: 1280px; height: 1024px; overflow: hidden; font-family: "Noto Sans", "Open Sans", sans-serif; font-size: 12px; color: #444; background: #fff; }
svg { display: block; flex: none; }
.app { width: 1280px; height: 1024px; display: flex; flex-direction: column; }

.caret { display: inline-block; width: 0; height: 0; border-left: 3.5px solid transparent; border-right: 3.5px solid transparent; border-top: 4px solid #999; flex: none; }
.caret.dark { border-top-color: #222; }
.ls1 { letter-spacing: -.1px; }
.ls3 { letter-spacing: -.3px; }
.ls5 { letter-spacing: -.5px; }
.ls8 { letter-spacing: -.8px; }

/* title bar */
.titlebar { height: 27px; background: #f0f0f0; display: flex; align-items: center; position: relative; flex: none; }
.qa { display: flex; align-items: center; gap: 8.800px; padding-left: 6px; }
.qa .caret { margin-left: -8px; }
.customize { width: 6px; height: 6px; margin-left: -2px; border-top: 1px solid #222; border-bottom: 3px solid #222; border-left: 1px solid #f0f0f0; border-right: 1px solid #f0f0f0; }
.doc-title { position: absolute; left: 528px; top: 4px; font-size: 11.900px; line-height: 18px; color: #555; }
.winbtns { margin-left: auto; display: flex; align-items: center; gap: 24px; padding-right: 13px; }

/* menu */
.menubar { height: 25px; background: #f0f0f0; display: flex; align-items: flex-end; border-bottom: 1px solid #aaa; flex: none; }
.file-tab { width: 63px; height: 24px; background: #f28500; color: #fff; font-weight: 500; display: flex; align-items: center; justify-content: center; }
.home-tab { width: 81px; height: 25px; margin-left: 1px; margin-bottom: -1px; padding-top: 1px; background: #fff; border: 1px solid #aaa; border-bottom: 0; color: #222; display: flex; align-items: center; justify-content: center; font-size: 13px; }
.menu-items { display: flex; flex: none; width: 580px; gap: 29px; padding: 2px 0 0 13px; height: 24px; align-items: center; color: #555; font-size: 11.400px; }
.tell { display: flex; align-items: center; gap: 8px; height: 24px; padding-top: 2px; margin-left: 33px; color: #888; letter-spacing: .2px; }
.menu-right { margin-left: auto; display: flex; align-items: center; height: 24px; padding-right: 4px; }
.heart { margin-right: 9px; }
.foldersearch { margin-right: 5px; }
.searchbox { width: 120px; height: 22px; background: #fff; border: 1px solid #b4b4b4; display: flex; align-items: center; justify-content: space-between; padding: 0 2px 0 4px; color: #777; }
.gear { margin-left: 6px; margin-right: 6px; }
.navl { margin-left: 9px; }
.navr { margin-left: 21px; }
.avatar { margin-left: 12px; margin-right: 7px; }

/* ribbon */
.ribbon { height: 92px; background: #fff; display: flex; position: relative; flex: none; border-bottom: 1px solid #aaa; }
.rgroup { display: flex; flex-direction: column; height: 85px; margin-top: 4px; border-right: 1px solid #d4d4d4; flex: none; position: relative; }
.rbody { flex: 1; display: flex; }
.rlabel { height: 18px; text-align: center; color: #777; font-size: 11.500px; line-height: 20px; }
.lab-comm { font-size: 10.500px; letter-spacing: -.25px; }
.lab-prot { font-size: 11px; }
.g-util { width: 228px; }
.g-view { width: 297px; }
.g-comm { width: 141px; }
.g-create { width: 79px; }
.g-protect { width: 67px; }
.g-links { width: 88px; }
.g-insert { width: 193px; }
.big { display: flex; flex-direction: column; align-items: center; padding-top: 4px; line-height: 16px; text-align: center; color: #444; }
.big svg { height: 28px; margin-bottom: 5px; }
.hand { width: 46px; padding-left: 3px; }
.big.select { width: 56px; height: 69px; margin-top: -1px; padding-top: 2px; background: #c2d5f2; }
.big.select svg { height: 30px; margin-bottom: 6px; margin-left: 4px; }
.under { margin-top: 6px; }
.small-col { display: flex; flex-direction: column; padding-left: 8px; margin-top: -1px; }
.c-snap { padding-left: 4px; }
.srow { height: 22px; display: flex; align-items: center; gap: 4px; white-space: nowrap; color: #444; }
.gapped { margin-left: 5px; }
.b-true { width: 56px; margin-left: 9px; }
.iconcol { display: flex; flex-direction: column; margin-left: 9px; margin-top: 3px; gap: 6px; }
.b-rev { width: 58px; margin-left: 8px; }
.c-zoom { padding-left: 8px; }
.combo { width: 78px; height: 22px; margin: 0 0 0 2px; border: 1px solid #b4b4b4; display: flex; align-items: center; justify-content: space-between; padding: 0 6px 0 4px; color: #222; }
.b-file { width: 36px; margin-left: 9px; }
.disabled { color: #bbb; }
.b-sign { width: 66px; color: #333; }
.collapse { position: absolute; right: 9px; bottom: 7px; }

/* doc tabs */
.tabstrip { height: 33px; background: #f0f0f0; display: flex; align-items: flex-end; border-bottom: 1px solid #aaa; flex: none; padding-left: 37px; position: relative; }
.doc-tab { height: 24px; position: relative; display: flex; align-items: center; font-size: 12px; color: #444; padding-top: 4px; overflow: visible; }
.doc-tab::before, .doc-tab::after { content: ""; position: absolute; top: 0; bottom: 0; width: 60%; background: #f0f0f0; border-top: 1px solid #bcbcbc; }
.doc-tab::before { left: 0; border-left: 1px solid #bcbcbc; border-radius: 7px 0 0 0; transform: skewX(-20deg); transform-origin: bottom left; }
.doc-tab::after { right: 0; border-right: 1px solid #bcbcbc; border-radius: 0 7px 0 0; transform: skewX(20deg); transform-origin: bottom right; }
.doc-tab > * { position: relative; z-index: 1; }
.doc-tab.active::before, .doc-tab.active::after { background: #fff; }
.t-start { width: 158px; padding-left: 17px; font-size: 11.700px; }
.t-info { width: 147px; padding-left: 10px; font-size: 11.900px; }
.t-plan { width: 188px; padding-left: 14px; margin-bottom: -1px; height: 25px; color: #333; }
.t-plan svg { margin-left: 19px; }
.strip-arrow { position: absolute; left: 1104px; top: 16px; width: 0; height: 0; border-left: 5px solid transparent; border-right: 5px solid transparent; border-top: 5px solid #111; }
.ad { position: absolute; left: 1119px; top: 0; width: 161px; height: 32px; background: #04ae8f; display: flex; align-items: center; justify-content: space-between; padding: 0 14px 1px 6px; color: #fff; }
.ad-text { font: italic 700 13px/13px "Liberation Sans", sans-serif; }

/* viewer */
.viewer { height: 777px; display: flex; flex: none; overflow: hidden; }
.sidepanel { width: 36px; background: #f0f0f0; display: flex; flex-direction: column; align-items: center; flex: none; position: relative; padding-top: 52px; }
.sidepanel svg { height: 22px; margin-bottom: 23.500px; }
.expand { position: absolute; left: 23px; top: 7px; border-left: 5px solid #111; border-top: 5px solid transparent; border-bottom: 5px solid transparent; }
.workspace { flex: 1; display: flex; background: #a9a9a9; padding-left: 21px; position: relative; min-width: 0; }
.grip { position: absolute; left: 3px; top: 327px; width: 5px; height: 33px; background-image: radial-gradient(circle, #777 .7px, transparent .8px); background-size: 3px 3px; }
.rightgap { width: 16px; flex: none; border-left: 1px solid #666; }
.page { flex: 1; background: #fff; border-left: 1px solid #555; padding-left: 113px; min-width: 0; overflow: hidden; }
.doc-table { width: 991px; border-left: 1px solid #000; border-right: 1px solid #000; font-family: "Liberation Serif", serif; color: #000; }
.row { display: flex; border-bottom: 1px solid #000; }
.cell { flex: none; }
.main-cell { width: 823px; }
.side-cell { width: 166px; border-left: 1px solid #000; }
.center { text-align: center; }
.r1 { height: 166px; }
.r1 .main-cell { padding: 0 11px 0 53px; }
.cut-lines { display: flex; height: 3px; margin-top: 1px; }
.cut-lines i { height: 2px; background: #000; display: block; }
.b1 { width: 252px; }
.b2 { width: 99px; margin-left: 14px; }
.b3 { width: 324px; margin-left: 14px; }
.para { margin: 9px 0 0; font-size: 28px; line-height: 48px; text-align: justify; }
.r2 { height: 472px; display: block; position: relative; font-size: 24px; line-height: 27.500px; padding: 32px 0 0 10px; }
.labels { display: grid; grid-template-columns: 323px 235px 291px auto; line-height: 28px; height: 56px; }
.word { width: 968px; height: 198px; margin-top: 31px; font-family: "Open Sans", "Noto Sans", sans-serif; color: #666; filter: blur(.4px); overflow: hidden; line-height: normal; }
.captions { display: flex; margin-top: 40px; }
.cap-l { width: 547px; }
.cap-stretch { letter-spacing: .13px; }
.cap-words { word-spacing: .8px; }
.marks { position: absolute; left: 0; top: 0; }
.r3 { height: 98px; }
.task { font-size: 28px; line-height: 32px; padding: 1px 0 0 10px; }
.side-cell.center { font-size: 28px; line-height: 32px; padding-top: 1px; }
.r4 { height: 80px; }
.r4 .task, .r4 .side-cell.center { padding-top: 0; }
.r4 .task { letter-spacing: -.08px; }

/* word picture */
.w-qa { height: 30px; padding-bottom: 1px; display: flex; align-items: center; position: relative; }
.m1 { margin-left: 12px; }
.m2 { margin-left: 16px; }
.m3 { margin-left: 17px; }
.m4 { margin-left: 15px; }
.m5 { margin-left: 17px; }
.m6 { margin-left: 14px; }
.m7 { margin-left: 17px; }
.w-cust { width: 6px; height: 6px; margin-left: 19px; border-top: 1px solid #888; border-bottom: 2px solid #888; }
.w-title { position: absolute; left: 703px; top: 5px; font-size: 14px; color: #666; white-space: nowrap; }
.w-tabs { height: 31px; display: flex; border-bottom: 1px solid #d8d8d8; font-size: 14px; }
.w-file { width: 70px; flex: none; height: 30px; padding-bottom: 1px; background: #2b579a; color: #fff; display: flex; align-items: center; justify-content: center; }
.w-home { width: 94px; flex: none; height: 31px; margin-left: 6px; padding-bottom: 1px; background: #fff; border: 1px solid #d8d8d8; border-bottom: 0; color: #2b579a; display: flex; align-items: center; justify-content: center; }
.w-tablist { display: flex; gap: 35px; padding: 0 0 1px 19px; align-items: center; height: 30px; white-space: nowrap; color: #666; }
.w-rib { height: 108px; display: flex; border-bottom: 1px solid #e0e0e0; font-size: 13.500px; }
.w-group { display: flex; flex-direction: column; border-right: 1px solid #dcdcdc; flex: none; }
.wg-clip { width: 238px; }
.wg-font { width: 318px; }
.wg-para { width: 268px; }
.wg-body { flex: 1; display: flex; }
.wg-body.column { flex-direction: column; }
.wg-label { height: 21px; padding-right: 20px; position: relative; text-align: center; color: #777; font-size: 13.200px; line-height: 26px; }
.launch { position: absolute; right: 5px; top: 8px; width: 8px; height: 8px; border-left: 1px solid #999; border-top: 1px solid #999; background: linear-gradient(135deg, transparent 50%, #999 50%); }
.w-caret { display: inline-block; width: 0; height: 0; flex: none; border-left: 3px solid transparent; border-right: 3px solid transparent; border-top: 3px solid #777; }
.paste { width: 72px; display: flex; flex-direction: column; align-items: center; padding-top: 7px; color: #555; font-size: 13px; }
.paste svg { margin-left: 2px; }
.paste span { margin-top: 2px; line-height: 20px; }
.paste .w-caret { margin-top: 8px; }
.clip-tools { display: flex; flex-direction: column; padding-top: 2px; }
.ct { height: 27.500px; display: flex; align-items: center; gap: 4px; white-space: nowrap; color: #555; font-size: 13.200px; }
.ct.dim { color: #a0a0a0; }
.f-row, .p-row { display: flex; align-items: center; }
.f1 { height: 27px; margin-top: 12px; padding-left: 5px; }
.f2 { height: 29px; margin-top: 8px; padding-left: 10px; }
.w-combo { height: 27px; display: flex; align-items: center; justify-content: space-between; border: 1px solid #c8c8c8; padding: 0 6px 0 3px; color: #444; white-space: nowrap; overflow: hidden; }
.cb-font { width: 102px; font-size: 13px; }
.cb-size { width: 65px; border-left: 0; }
.bigA { font-size: 17px; color: #666; position: relative; }
.bigA::after { content: ""; position: absolute; left: 100%; top: 2px; border-left: 3px solid transparent; border-right: 3px solid transparent; }
.bigA.up { margin-left: 8px; }
.bigA.up::after { border-bottom: 3px solid #3d80bf; }
.bigA.down { margin-left: 17px; font-size: 14px; }
.bigA.down::after { border-top: 3px solid #3d80bf; }
.w-div { width: 1px; height: 28px; background: #dcdcdc; flex: none; }
.d1 { margin-left: 14px; }
.aa { margin-left: 9px; font-size: 15.500px; margin-right: 5px; }
.d2 { margin-left: 7px; }
.eraser { margin-left: 15px; }
.bt { font-size: 15px; color: #555; }
.b-zh { width: 15px; }
.b-k { width: 10px; margin-left: 13px; font-weight: 700; }
.b-ch { width: 11px; margin-left: 17px; font-weight: 700; }
.c-ch { margin-left: 11px; }
.abc { margin-left: 9px; font-size: 13px; width: 20px; }
.xs { font-weight: 700; font-size: 14px; width: 17px; color: #555; }
.x1 { margin-left: 8px; }
.x2 { margin-left: 9px; }
.xs sub, .xs sup { font-size: 8px; color: #3d80bf; line-height: 0; }
.d3 { margin-left: 9px; }
.outlineA { margin-left: 9px; width: 18px; font-size: 22px; font-weight: 700; color: #cfe0f3; -webkit-text-stroke: 1px #3d80bf; margin-right: 5px; line-height: 1; }
.hiA { margin-left: 9px; font-size: 12px; line-height: 14px; width: 20px; border-bottom: 5px solid #fff200; margin-right: 7px; }
.colorA { margin-left: 9px; font-size: 16px; font-weight: 700; line-height: 18px; width: 18px; text-align: center; border-bottom: 4px solid #000; color: #555; margin-right: 7px; }
.p1 { height: 27px; margin-top: 12px; padding-left: 9px; }
.p1 > svg + .w-caret { margin: 0 9px 0 9px; }
.outd { margin-left: 29px; }
.ind { margin-left: 7px; }
.sort { margin-left: 20px; }
.d4 { margin-left: 8px; }
.pilcrow { margin-left: 11px; font-size: 18px; font-weight: 700; color: #777; }
.p2 { height: 29px; margin-top: 8px; padding-left: 5px; }
.al { width: 26.500px; height: 28px; display: flex; align-items: center; justify-content: center; }
.al.active { background: #c5d9f0; }
.ls { margin-left: 13px; }
.p2 .w-caret { margin-left: 5px; }
.d5 { margin-left: 10px; }
.fill { margin-left: 9px; }
.bord { margin-left: 9px; }
.w-styles { width: 144px; height: 71px; margin: 7px 0 0 7px; display: flex; border: 1px solid #c6c6c6; border-right: 0; overflow: hidden; color: #555; }
.st { flex: none; width: 56px; display: flex; flex-direction: column; white-space: nowrap; padding: 16px 0 0 5px; overflow: hidden; }
.st.sel { width: 86px; border: 3px solid #c5d9f0; padding: 14px 0 0 4px; }
.st-a { color: #1d2b45; font-size: 14.500px; font-family: "Open Sans", sans-serif; }
.st-n { margin-top: 9px; margin-left: -2px; font-size: 13.200px; color: #666; }
.w-ruler { height: 29px; display: flex; align-items: flex-start; position: relative; }
.w-ruler svg { margin-top: 3px; margin-left: -27px; }
.corner { width: 27px; height: 27px; margin-top: 2px; background: #eee; display: flex; align-items: center; justify-content: center; position: relative; z-index: 1; }
.corner i { width: 7px; height: 7px; border-left: 2px solid #555; border-bottom: 2px solid #555; }
.ticks { stroke: #aaa; fill: none; }
.rnums { font-size: 11px; fill: #555; text-anchor: middle; }

/* scrollbar */
.scrollbar { width: 17px; background: #f0f0f0; flex: none; display: flex; flex-direction: column; align-items: center; position: relative; }
.sb-corner { width: 17px; height: 10px; background: #d0d0d0; border: 1px solid #888; flex: none; }
.sb-up { margin-top: 7px; }
.sb-thumb { position: absolute; top: 308px; left: 1px; width: 15px; height: 31px; background: #cdcdcd; }
.sb-down { margin-top: auto; margin-bottom: 2px; }

/* status bar */
.statusbar { height: 30px; background: #f0f0f0; display: flex; align-items: center; flex: none; padding-left: 518px; color: #444; }
.pager { display: flex; align-items: center; }
.prev { margin-left: 14px; }
.page-combo { width: 115px; height: 19px; margin-left: 12px; background: #fff; border: 1px solid #aaa; display: flex; align-items: center; justify-content: space-between; padding: 0 4px; font-size: 12px; color: #333; }
.next { margin-left: 9px; }
.last { margin-left: 15px; }
.view-a { margin-left: 11px; }
.view-b { margin-left: 9px; }
.zoomctl { display: flex; align-items: center; margin-left: 165px; }
.v2 { width: 23px; height: 21px; background: #c2d5f2; display: flex; justify-content: center; margin-left: 10px; overflow: hidden; }
.v3 { margin-left: 6px; }
.v4 { margin-left: 10px; }
.pct { margin-left: 25px; width: 59px; color: #444; }
.pct-c { margin-right: 2px; }
.slider { width: 91px; height: 1px; background: #444; margin: 0 6px 0 7px; position: relative; }
.slider i { position: absolute; left: 45px; top: -3px; width: 1px; height: 7px; background: #444; }
.slider b { position: absolute; left: 47px; top: -4px; width: 4px; height: 9px; background: #333; }

/* taskbar */
.taskbar { height: 40px; background: #d1d9e3; display: flex; flex: none; }
.tb-cell { width: 48px; height: 40px; display: flex; align-items: center; justify-content: center; }
.tb-apps { display: flex; margin-left: 4px; }
.tb-app { width: 48.700px; height: 40px; display: flex; align-items: center; justify-content: center; position: relative; }
.tb-app.on::after { content: ""; position: absolute; left: 4px; right: 5px; bottom: 0; height: 2px; background: #0078d7; }
.tb-app.active { background: #e9edf2; }
.tray { margin-left: auto; display: flex; align-items: center; color: #222; }
.lang { margin-left: 13px; font-size: 11.500px; }
.clock { width: 66px; margin-left: 11px; display: flex; flex-direction: column; align-items: center; font-size: 11.200px; line-height: 17px; }
.showdesk { width: 1px; height: 40px; background: #a8b0bb; margin-left: 1px; margin-right: 1px; }
```
